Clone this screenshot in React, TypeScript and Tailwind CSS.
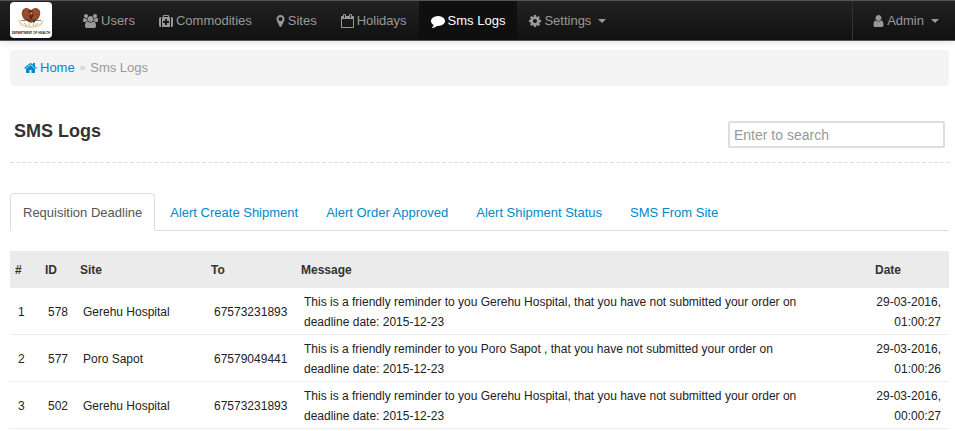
import type { ReactNode } from "react";

type IconProps = { name: keyof typeof icons };

const icons = {
  home: {
    width: 1664,
    box: "w-[13px]",
    d: "M1408 992v480q0 26-19 45t-45 19h-384v-384h-256v384h-384q-26 0-45-19t-19-45v-480q0-1 .5-3t.5-3l575-474 575 474q1 2 1 6zm223-69l-62 74q-8 9-21 11h-3q-13 0-21-7l-692-577-692 577q-12 8-24 7-13-2-21-11l-62-74q-8-10-7-23.5t11-21.5l719-599q32-26 76-26t76 26l244 204v-195q0-14 9-23t23-9h192q14 0 23 9t9 23v408l219 182q10 8 11 21.5t-7 23.5z",
  },
  users: {
    width: 1920,
    box: "w-[15px]",
    d: "M593 896q-162 5-265 128h-134q-82 0-138-40.5t-56-118.5q0-353 124-353 6 0 43.5 21t97.5 42.5 119 21.5q67 0 133-23-5 37-5 66 0 159 93 293zm1071 637q0 120-73 189.5t-194 69.5h-874q-121 0-194-69.5t-73-189.5q0-53 3.5-103.5t14-109 26.5-108.5 43-97.5 62-81 85.5-53.5 111.5-20q10 0 43 21.5t73 48 107 48 135 21.5 135-21.5 107-48 73-48 43-21.5q61 0 111.5 20t85.5 53.5 62 81 43 97.5 26.5 108.5 14 109 3.5 103.5zm-1024-1277q0 106-75 181t-181 75-181-75-75-181 75-181 181-75 181 75 75 181zm704 384q0 159-112.5 271.5t-271.5 112.5-271.5-112.5-112.5-271.5 112.5-271.5 271.5-112.5 271.5 112.5 112.5 271.5zm576 225q0 78-56 118.5t-138 40.5h-134q-103-123-265-128 93-134 93-293 0-29-5-66 66 23 133 23 59 0 119-21.5t97.5-42.5 43.5-21q124 0 124 353zm-128-609q0 106-75 181t-181 75-181-75-75-181 75-181 181-75 181 75 75 181z",
  },
  medkit: {
    width: 1792,
    box: "w-3.5",
    d: "M1280 1120v-192q0-14-9-23t-23-9h-224v-224q0-14-9-23t-23-9h-192q-14 0-23 9t-9 23v224h-224q-14 0-23 9t-9 23v192q0 14 9 23t23 9h224v224q0 14 9 23t23 9h192q14 0 23-9t9-23v-224h224q14 0 23-9t9-23zm-640-736h512v-128h-512v128zm-384 0v1280h-32q-92 0-158-66t-66-158v-832q0-92 66-158t158-66h32zm1152 0v1280h-1024v-1280h128v-160q0-40 28-68t68-28h576q40 0 68 28t28 68v160h128zm384 224v832q0 92-66 158t-158 66h-32v-1280h32q92 0 158 66t66 158z",
  },
  marker: {
    width: 1024,
    box: "w-[9px]",
    d: "M768 640q0-106-75-181t-181-75-181 75-75 181 75 181 181 75 181-75 75-181zm256 0q0 109-33 179l-364 774q-16 33-47.5 52t-67.5 19-67.5-19-46.5-52l-365-774q-33-70-33-179 0-212 150-362t362-150 362 150 150 362z",
  },
  calendar: {
    width: 1664,
    box: "w-[13px]",
    d: "M128 1664h1408v-1024h-1408v1024zm384-1216v-288q0-14-9-23t-23-9h-64q-14 0-23 9t-9 23v288q0 14 9 23t23 9h64q14 0 23-9t9-23zm768 0v-288q0-14-9-23t-23-9h-64q-14 0-23 9t-9 23v288q0 14 9 23t23 9h64q14 0 23-9t9-23zm384-64v1280q0 52-38 90t-90 38h-1408q-52 0-90-38t-38-90v-1280q0-52 38-90t90-38h128v-96q0-66 47-113t113-47h64q66 0 113 47t47 113v96h384v-96q0-66 47-113t113-47h64q66 0 113 47t47 113v96h128q52 0 90 38t38 90z",
  },
  comment: {
    width: 1792,
    box: "w-3.5",
    d: "M1792 896q0 174-120 321.5t-326 233-450 85.5q-70 0-145-8-198 175-460 242-49 14-114 22-17 2-30.5-9t-17.5-29v-1q-3-4-.5-12t2-10 4.5-9.5l6-9 7-8.5 8-9q7-8 31-34.5t34.5-38 31-39.5 32.5-51 27-59 26-76q-157-89-247.5-220t-90.5-281q0-130 71-248.5t191-204.5 286-136.5 348-50.5q244 0 450 85.5t326 233 120 321.5z",
  },
  cog: {
    width: 1536,
    box: "w-3",
    d: "M1024 896q0-106-75-181t-181-75-181 75-75 181 75 181 181 75 181-75 75-181zm512-109v222q0 12-8 23t-20 13l-185 28q-19 54-39 91 35 50 107 138 10 12 10 25t-9 23q-27 37-99 108t-94 71q-12 0-26-9l-138-108q-44 23-91 38-16 136-29 186-7 28-36 28h-222q-14 0-24.5-8.5t-11.5-21.5l-28-184q-49-16-90-37l-141 107q-10 9-25 9-14 0-25-11-126-114-165-168-7-10-7-23 0-12 8-23 15-21 51-66.5t54-70.5q-27-50-41-99l-183-27q-13-2-21-12.5t-8-23.5v-222q0-12 8-23t19-13l186-28q14-46 39-92-40-57-107-138-10-12-10-24 0-10 9-23 26-36 98.5-107.5t94.5-71.5q13 0 26 10l138 107q44-23 91-38 16-136 29-186 7-28 36-28h222q14 0 24.5 8.5t11.5 21.5l28 184q49 16 90 37l142-107q9-9 24-9 13 0 25 10 129 119 165 170 7 8 7 22 0 12-8 23-15 21-51 66.5t-54 70.5q26 50 41 98l183 28q13 2 21 12.5t8 23.5z",
  },
  user: {
    width: 1280,
    box: "w-[11px]",
    d: "M1280 1399q0 109-62.5 187t-150.5 78h-854q-88 0-150.5-78t-62.5-187q0-85 8.5-160.5t31.5-152 58.5-131 94-89 134.5-34.5q131 128 313 128t313-128q76 0 134.5 34.5t94 89 58.5 131 31.5 152 8.5 160.5zm-256-887q0 159-112.5 271.5t-271.5 112.5-271.5-112.5-112.5-271.5 112.5-271.5 271.5-112.5 271.5 112.5 112.5 271.5z",
  },
};

function Icon({ name }: IconProps) {
  const icon = icons[name];
  return (
    <svg
      aria-hidden="true"
      viewBox={`0 0 ${icon.width} 1792`}
      className={`h-3.5 shrink-0 fill-current ${icon.box}`}
    >
      <path d={icon.d} />
    </svg>
  );
}

function Caret() {
  return (
    <svg aria-hidden="true" viewBox="0 0 8 4" className="ml-1 h-1 w-2 fill-current">
      <path d="M0 0h8L4 4z" />
    </svg>
  );
}

/* Crest: bird of paradise over a spear and drum, with the department name below. */
function Logo() {
  return (
    <a href="#home" aria-label="Department of Health" className="h-9 w-[42px] rounded-sm bg-white">
      <svg aria-hidden="true" viewBox="0 0 42 36" className="h-9 w-[42px]">
        <g transform="translate(7 4)" fill="none">
          <path
            d="M14 4.500C12 1.500 8 1 6 3.500c-2.500 3-1 8 2 10.500l6 3 6-3c3-2.500 4.500-7.500 2-10.500-2-2.500-6-2-8 1z"
            fill="#93492a"
          />
          <path d="M13 6L9 4M13 8L7 6M15 6l4-2M15 8l6-2M9 10l4 3M19 10l-4 3" stroke="#a85a35" />
          <path d="M11 5c2-2 4-1 5 1 1 3 0 6-2 8-2-2-2-4-1-6z" fill="#5e2817" />
          <path d="M13 6l3 1-2 2z" fill="#d99a3c" />
          <path d="M4 14.500h6M18 14.500h6" stroke="#8b8a80" />
          <path d="M9 13l3 3 2-2 3 3 3-4-3 0-3 2-3-2z" fill="#45443c" />
          <path d="M2 14c1 5 6 7 12 7s11-2 12-7" stroke="#ead9b2" strokeWidth="2" />
          <path d="M7 17l3 3M12 17l0 3M17 17l-1 3M21 17l-3 3" stroke="#d1b578" />
        </g>
        <text
          x="21"
          y="32"
          textAnchor="middle"
          fontSize="3"
          fontWeight="bold"
          fontFamily="Liberation Sans, Arial, sans-serif"
          fill="#222"
        >
          DEPARTMENT OF HEALTH
        </text>
      </svg>
    </a>
  );
}

function NavLink({ icon, active, children }: { icon: IconProps["name"]; active?: boolean; children: ReactNode }) {
  return (
    <a
      href={`#${icon}`}
      className={`flex items-center gap-[3px] px-3 ${active ? "bg-[#0f0f0f] text-white" : "text-[#999]"}`}
    >
      <Icon name={icon} />
      {children}
    </a>
  );
}

function NavMenu({ icon, label }: { icon: IconProps["name"]; label: string }) {
  return (
    <button type="button" aria-haspopup="menu" className="flex items-center gap-[3px] px-3 text-[#999]">
      <Icon name={icon} />
      {label}
      <Caret />
    </button>
  );
}

const tabs = [
  "Requisition Deadline",
  "Alert Create Shipment",
  "Alert Order Approved",
  "Alert Shipment Status",
  "SMS From Site",
];

const logs = [
  { id: 578, site: "Gerehu Hospital", name: "Gerehu Hospital", to: "67573231893", date: "29-03-2016, 01:00:27" },
  { id: 577, site: "Poro Sapot", name: "Poro Sapot ", to: "67579049441", date: "29-03-2016, 01:00:26" },
  { id: 502, site: "Gerehu Hospital", name: "Gerehu Hospital", to: "67573231893", date: "29-03-2016, 00:00:27" },
];

export default function App() {
  return (
    <div className="bg-white font-['Liberation_Sans',Arial,sans-serif] text-[13px] leading-5 text-[#333]">
      <header className="flex h-[41px] border-y border-[#555] bg-linear-to-b from-[#222] to-[#111] pr-1 pl-2.5 shadow-[0_1px_8px_rgba(0,0,0,0.12)]">
        <div className="flex items-start pt-px">
          <Logo />
        </div>
        <nav className="ml-[19px] flex flex-1">
          <NavLink icon="users">Users</NavLink>
          <NavLink icon="medkit">Commodities</NavLink>
          <NavLink icon="marker">Sites</NavLink>
          <NavLink icon="calendar">Holidays</NavLink>
          <NavLink icon="comment" active>
            Sms Logs
          </NavLink>
          <NavMenu icon="cog" label="Settings" />
        </nav>
        <div className="flex border-l border-[#333] pl-2">
          <NavMenu icon="user" label="Admin" />
        </div>
      </header>

      <main className="pt-[9px] pr-1.5 pl-2.5">
        <nav aria-label="Breadcrumb" className="flex h-9 items-center rounded bg-[#f4f4f4] px-3.5">
          <a href="#home" className="flex items-center gap-[3px] text-[#0088cc]">
            <Icon name="home" />
            Home
          </a>
          <span aria-hidden="true" className="px-[5px] text-[10px] text-[#bbb]">
            »
          </span>
          <span className="text-[#999]">Sms Logs</span>
        </nav>

        <div className="mt-[35px] flex justify-between pr-1 pb-3.5 pl-1">
          <h1 className="text-lg leading-5 font-bold">SMS Logs</h1>
          <input
            type="search"
            aria-label="Search"
            placeholder="Enter to search"
            className="h-[27px] w-[217px] rounded-xs border-2 border-[#ddd] px-1 text-sm placeholder:text-[#999]"
          />
        </div>
        <div className="h-px bg-[repeating-linear-gradient(to_right,#ddd_0_4px,transparent_4px_6px)]" />

        <div role="tablist" className="mt-[30px] flex gap-0.5 border-b border-[#ddd]">
          {tabs.map((tab, index) => (
            <button
              key={tab}
              type="button"
              role="tab"
              aria-selected={index === 0}
              className={`-mb-px h-[38px] rounded-t border px-3 pt-0.5 ${
                index === 0 ? "border-[#ddd] border-b-white bg-white text-[#555]" : "border-transparent text-[#0088cc]"
              }`}
            >
              {tab}
            </button>
          ))}
        </div>

        <table className="mt-5 w-full table-fixed text-xs leading-5">
          <colgroup>
            <col className="w-[30px]" />
            <col className="w-[35px]" />
            <col className="w-[131px]" />
            <col className="w-[90px]" />
            <col />
            <col className="w-[79px]" />
          </colgroup>
          <thead>
            <tr className="h-[37px] bg-[#ebebeb] text-left">
              {["#", "ID", "Site", "To", "Message", "Date"].map((heading) => (
                <th key={heading} scope="col" className="px-[5px] font-bold">
                  {heading}
                </th>
              ))}
            </tr>
          </thead>
          <tbody>
            {logs.map((log, index) => (
              <tr key={log.id} className="border-b border-[#eee] text-[#222]">
                <td className="px-2 pt-1 pb-0.5">{index + 1}</td>
                <td className="px-2 pt-1 pb-0.5">{log.id}</td>
                <td className="px-2 pt-1 pb-0.5">{log.site}</td>
                <td className="px-2 pt-1 pb-0.5">{log.to}</td>
                <td className="px-2 pt-1 pb-0.5">
                  <p className="max-w-[510px]">
                    {`This is a friendly reminder to you ${log.name}, that you have not submitted your order on deadline date: 2015-12-23`}
                  </p>
                </td>
                <td className="pt-1 pr-2 pb-0.5 text-right">{log.date}</td>
              </tr>
            ))}
          </tbody>
        </table>
      </main>
    </div>
  );
}
